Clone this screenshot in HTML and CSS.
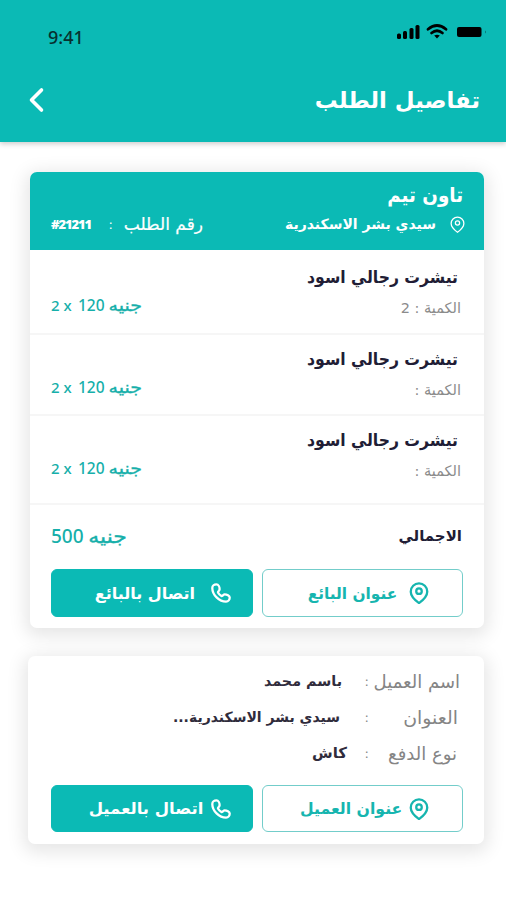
FILE: index.html
```html
<!DOCTYPE html>
<html lang="ar">
<head>
<meta charset="utf-8">
<title>تفاصيل الطلب</title>
<link rel="stylesheet" href="styles.css">
</head>
<body>
<svg class="sprite" width="0" height="0">
  <symbol id="pin" viewBox="0 0 24 24"><path d="M21 10.500c0 5-5 9.500-9 12.500-4-3-9-7.500-9-12.500a9 9 0 0 1 18 0z"/><circle cx="12" cy="10" r="3"/></symbol>
  <symbol id="phone" viewBox="0 0 24 24"><path d="M7 2.700c2.200 0 3.500 3 3.500 5.300 0 1.500-2 2.300-1.800 3.500.8 1.500 2.300 3 3.800 3.800 1.200.2 2-1.800 3.500-1.800 2.300 0 5.500 1.500 5.500 3.500 0 2.200-1.500 4.500-4 4.500C10 21.500 2.500 14 2.500 6.500c0-2.300 2-3.800 4.500-3.800z"/></symbol>
</svg>
<header class="header">
  <div class="status">
    <span class="time">9:41</span>
    <svg class="indicators" width="94" height="20" viewBox="0 0 94 20">
      <rect x="1" y="11.500" width="4" height="5.500" rx="1.500"/><rect x="7" y="9" width="4" height="8" rx="1.500"/><rect x="13.500" y="6" width="4" height="11" rx="1.500"/><rect x="19.500" y="3" width="4" height="14" rx="1.500"/>
      <g class="wave"><path d="M32 7.300q9-7.600 18 0"/><path d="M35.500 11q5.500-4.500 11 0"/></g><path d="M38.200 13.600q2.800-1.800 5.600 0L41 16.600z"/>
      <rect x="61" y="5" width="24.500" height="10" rx="2"/><path class="tip" d="M89 8.500q2 1.500 0 3z"/>
    </svg>
  </div>
  <div class="title-row">
    <svg class="back" width="18" height="26" viewBox="0 0 18 26"><path d="M14.500 3 4.500 13l10 10"/></svg>
    <h1 class="t title">تفاصيل الطلب</h1>
  </div>
</header>
<main>
  <section class="card order">
    <div class="card-head">
      <h2 class="t shop">تاون تيم</h2>
      <div class="head-row">
        <span class="number">#21211</span><span class="head-colon">:</span><span class="t number-label">رقم الطلب</span>
        <span class="t address">سيدي بشر الاسكندرية</span><svg class="head-pin"><use href="#pin"/></svg>
      </div>
    </div>
    <article class="item">
      <h3 class="t product">تيشرت رجالي اسود</h3>
      <div class="item-row"><span class="price"><span class="times">2 x</span><span class="amount">120</span><span class="t currency">جنيه</span></span><span class="t qty">الكمية : 2</span></div>
    </article>
    <article class="item second">
      <h3 class="t product">تيشرت رجالي اسود</h3>
      <div class="item-row"><span class="price"><span class="times">2 x</span><span class="amount">120</span><span class="t currency">جنيه</span></span><span class="t qty">الكمية :</span></div>
    </article>
    <article class="item third">
      <h3 class="t product">تيشرت رجالي اسود</h3>
      <div class="item-row"><span class="price"><span class="times">2 x</span><span class="amount">120</span><span class="t currency">جنيه</span></span><span class="t qty">الكمية :</span></div>
    </article>
    <div class="total"><span class="sum"><span class="sum-number">500</span><span class="t sum-currency">جنيه</span></span><span class="t total-label">الاجمالي</span></div>
    <div class="actions">
      <button class="btn solid"><span class="t call-seller">اتصال بالبائع</span><svg><use href="#phone"/></svg></button>
      <button class="btn outline"><span class="t seller-place">عنوان البائع</span><svg><use href="#pin"/></svg></button>
    </div>
  </section>
  <section class="card customer">
    <div class="detail"><span class="t value name">باسم محمد</span><span class="colon">:</span><span class="t label label-name">اسم العميل</span></div>
    <div class="detail"><span class="t value place">سيدي بشر الاسكندرية...</span><span class="colon">:</span><span class="t label label-place">العنوان</span></div>
    <div class="detail"><span class="t value cash">كاش</span><span class="colon">:</span><span class="t label label-pay">نوع الدفع</span></div>
    <div class="actions">
      <button class="btn solid"><span class="t call-client">اتصال بالعميل</span><svg><use href="#phone"/></svg></button>
      <button class="btn outline"><span class="t client-place">عنوان العميل</span><svg><use href="#pin"/></svg></button>
    </div>
  </section>
</main>
</body>
</html>
```
FILE: styles.css
```css
* { box-sizing: border-box; }
body { margin: 0; height: 900px; overflow: hidden; background: #fff; font-family: "DejaVu Sans", sans-serif; }
h1, h2, h3 { margin: 0; }
svg { fill: none; stroke: currentColor; stroke-width: 2.5; stroke-linecap: round; stroke-linejoin: round; flex: none; }
.sprite { display: block; height: 0; }
.t { direction: rtl; white-space: nowrap; text-align: right; transform-origin: right center; flex: none; }
.header { height: 142px; background: #0bbab5; color: #fff; box-shadow: 0 2px 5px #0003; }
.status { height: 60px; padding: 22px 16px 0 48px; display: flex; justify-content: space-between; }
.time { color: #07302f; font: 500 18px/31px "Noto Sans", sans-serif; }
.indicators { fill: #000; stroke: none; }
.wave { fill: none; stroke: #000; stroke-width: 2.7; }
.tip { fill: #08736f; }
.title-row { height: 80px; padding: 0 26px 0 27px; display: flex; align-items: center; justify-content: space-between; }
.back { stroke-width: 3.6; }
.title { font-size: 22.8px; font-weight: 700; }
main { padding: 30px 22px 0 28px; }
.card { background: #fff; border-radius: 7px; box-shadow: 0 4px 18px 4px #0000001a; }
.order { height: 456px; margin-left: 2px; }
.card-head { height: 78px; background: #0bbab5; color: #fff; padding: 8px 18px 0 21px; border-radius: 7px 7px 0 0; }
.shop { height: 30px; margin-right: 3px; font-size: 20px; line-height: 30px; transform: scaleX(.915); }
.head-row { height: 28px; display: flex; align-items: center; }
.number { width: 58px; font: 800 13px "Open Sans", sans-serif; letter-spacing: -1.1px; }
.head-colon { width: 14px; padding-left: 2px; font-size: 13px; }
.number-label { width: 80px; margin-left: 3px; font-size: 17px; -webkit-text-stroke: .2px; }
.address { width: 151px; margin-left: 82px; font-size: 14px; font-weight: 700; }
.head-pin { width: 17px; height: 17px; margin-left: 13px; stroke-width: 1.8; }
.item { height: 85px; padding: 12px 23px 0 21px; border-bottom: 2px solid #f6f6f6; }
.second { height: 81px; padding-top: 9px; }
.third { height: 89px; padding-top: 9px; }
.product { height: 30px; margin-right: 3px; font-size: 17px; line-height: 30px; font-weight: 700; color: #211d35; transform: scaleX(.92); }
.item-row { height: 28px; display: flex; justify-content: space-between; align-items: center; }
.price, .sum { display: flex; align-items: center; color: #16afaa; font-family: "Noto Sans", sans-serif; font-weight: 500; }
.price { height: 26px; padding-bottom: 2px; }
.times { width: 27px; font-size: 15px; }
.amount { width: 30px; font-size: 15.5px; }
.currency, .sum-currency { font-family: "DejaVu Sans", sans-serif; -webkit-text-stroke: .35px; }
.currency { width: 34px; font-size: 17px; transform: scaleX(1.12); }
.qty { padding-top: 3px; font-size: 14.5px; color: #8b8b8b; }
.total { height: 64px; padding: 0 22px 3px 21px; display: flex; align-items: center; justify-content: space-between; }
.sum-number { width: 38px; font-size: 19px; }
.sum-currency { width: 38px; font-size: 19px; transform: scaleX(1.16); }
.total-label { font-size: 15px; font-weight: 700; color: #211d35; }
.actions { display: flex; gap: 9px; padding-left: 21px; }
.btn { height: 48px; padding: 0 20px; display: flex; align-items: center; justify-content: flex-end; border: 1px solid #0bbab5; border-radius: 6px; font: 700 16px "DejaVu Sans", sans-serif; }
.btn svg { width: 22px; height: 22px; }
.solid { width: 202px; background: #0bbab5; color: #fff; }
.outline { width: 201px; padding-right: 32px; background: #fff; color: #16b5af; border-color: #73cdca; }
.call-seller { margin-right: 15px; }
.seller-place { margin-right: 11px; transform: scaleX(.96); }
.call-client { margin-right: 7px; transform: scaleX(1.03); }
.client-place { margin-right: 6px; transform: scaleX(.98); }
.customer { height: 188px; margin-top: 28px; padding-top: 7px; }
.customer .actions { padding: 14px 0 0 23px; }
.customer .btn { height: 47px; }
.detail { height: 36px; padding-right: 24px; display: grid; grid-template-columns: 1fr 27px 91px; align-items: center; }
.value { font-size: 14.3px; font-weight: 700; color: #302c3c; }
.place { padding-right: 2px; font-size: 14px; }
.cash { margin-right: -5px; font-size: 15px; }
.colon { text-align: right; font-size: 13px; color: #888; }
.label { font-size: 18px; color: #858585; }
.label-place { padding-right: 2px; transform: scaleX(1.05); }
.label-pay { padding-right: 3px; }
```
